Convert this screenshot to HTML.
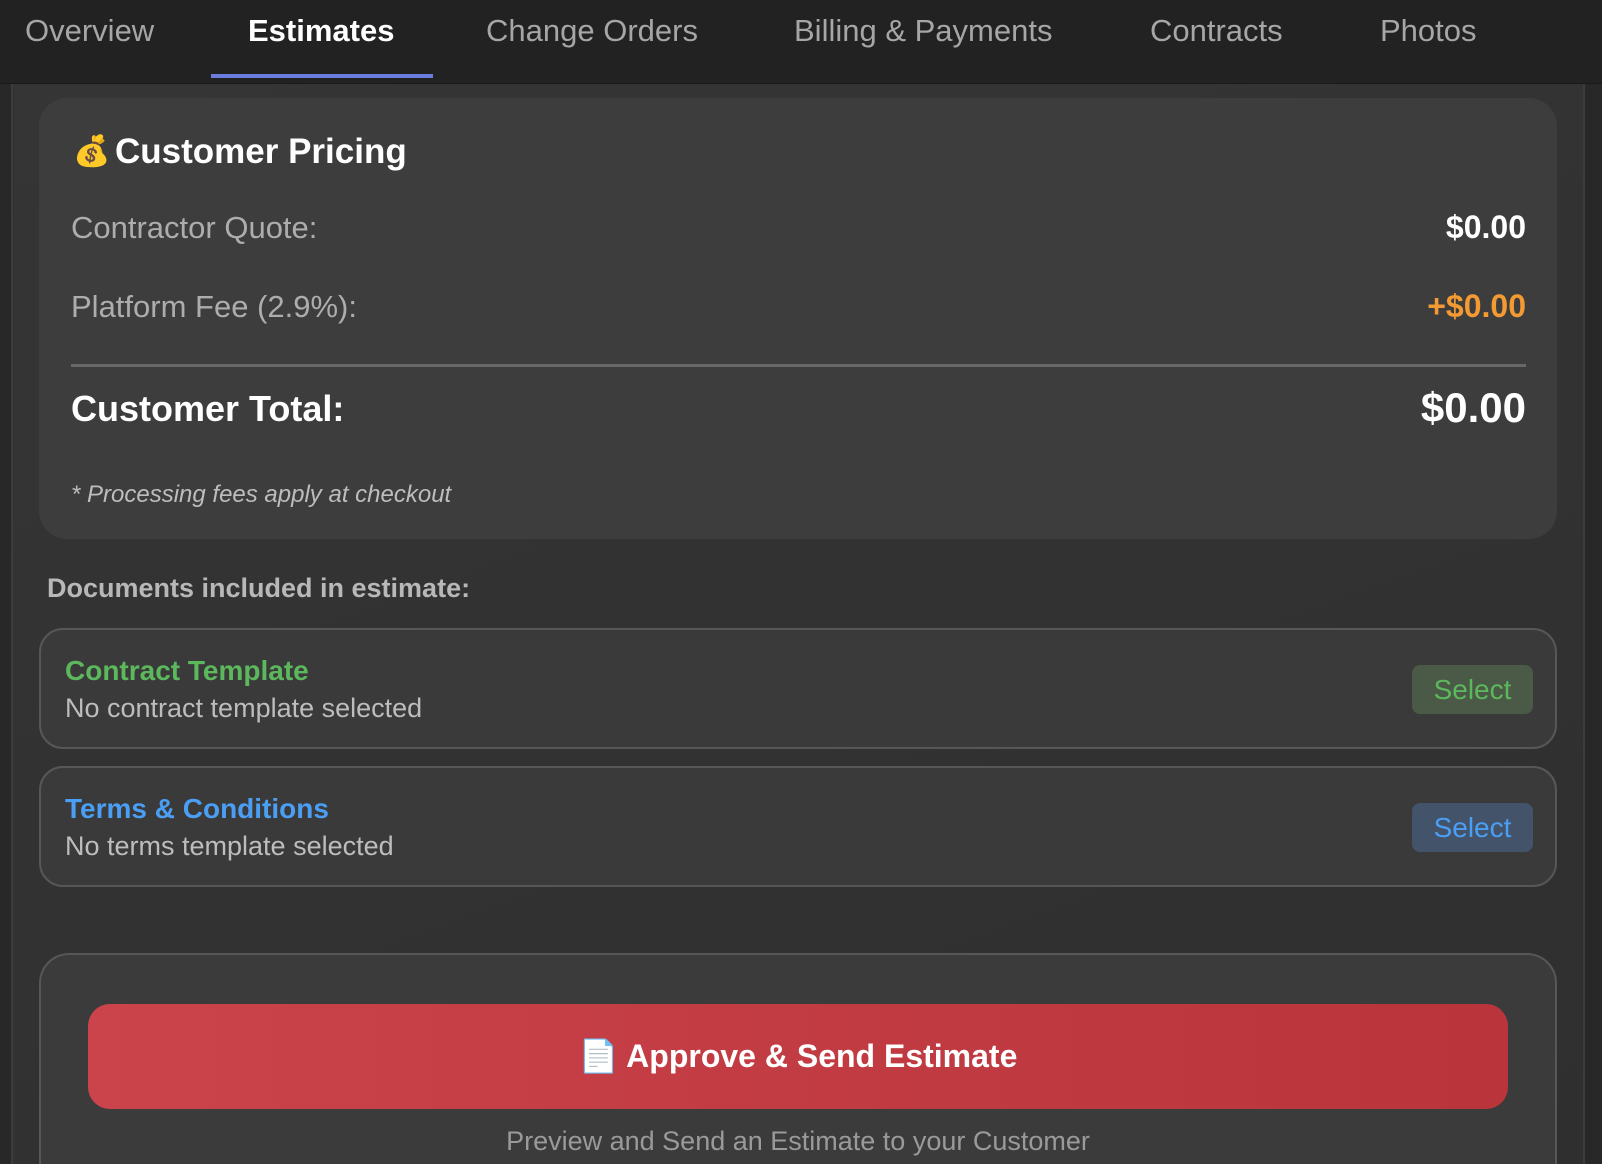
<!DOCTYPE html>
<html><head><meta charset="utf-8"><style>
*{box-sizing:border-box;margin:0;padding:0}
html,body{width:1602px;height:1164px;overflow:hidden}
body{background:#333;font-family:"Liberation Sans","DejaVu Sans",sans-serif;position:relative}
.nav{position:absolute;left:0;top:0;width:1602px;height:84px;background:#222;border-bottom:1px solid #1a1a1a}
.tab{position:absolute;top:10px;font-size:31px;color:#a6a6a6;line-height:42px}
.tab.act{color:#fff;font-weight:bold}
.ul{position:absolute;left:211px;top:74px;width:222px;height:4px;background:#6c7de0}
.lstrip{position:absolute;left:0;top:84px;width:13px;height:1080px;background:#282828;border-right:2px solid #3c3c3c}
.rstrip{position:absolute;left:1583px;top:84px;width:19px;height:1080px;background:#282828;border-left:2px solid #3c3c3c}
.main{position:absolute;left:15px;top:84px;width:1568px;height:1080px;background:linear-gradient(160deg,#353535,#2f2f2f)}
.card{position:absolute;left:39px;width:1518px;background:#3d3d3d;border-radius:28px}
.abs{position:absolute;white-space:nowrap}
.lbl{font-size:31px;color:#adadad}
.val{font-size:32px;color:#fff;font-weight:bold;right:31px}
.doc{position:absolute;left:39px;width:1518px;height:121px;border:2px solid #575757;border-radius:24px;background:#3a3a3a}
.btn{position:absolute;left:1371px;top:35px;width:121px;height:49px;border-radius:8px;font-size:28px;text-align:center;line-height:49px}
</style></head><body>
<div class="nav">
<div class="tab" style="left:25px">Overview</div>
<div class="tab act" style="left:248px">Estimates</div>
<div class="tab" style="left:486px">Change Orders</div>
<div class="tab" style="left:794px">Billing &amp; Payments</div>
<div class="tab" style="left:1150px">Contracts</div>
<div class="tab" style="left:1380px">Photos</div>
<div class="ul"></div>
</div>
<div class="lstrip"></div><div class="rstrip"></div>
<div class="main"></div>

<div class="card" style="top:98px;height:441px">
<div class="abs" style="left:34px;top:36px;font-size:30px">💰</div>
<div class="abs" style="left:76px;top:34px;font-size:35px;font-weight:bold;color:#fff">Customer Pricing</div>
<div class="abs lbl" style="left:32px;top:112px">Contractor Quote:</div>
<div class="abs val" style="top:111px">$0.00</div>
<div class="abs lbl" style="left:32px;top:191px">Platform Fee (2.9%):</div>
<div class="abs val" style="top:190px;color:#f39a32">+$0.00</div>
<div class="abs" style="left:32px;top:266px;width:1455px;height:3px;background:#686868"></div>
<div class="abs" style="left:32px;top:290px;font-size:36px;font-weight:bold;color:#fff">Customer Total:</div>
<div class="abs" style="right:31px;top:286px;font-size:42px;font-weight:bold;color:#fff">$0.00</div>
<div class="abs" style="left:32px;top:383px;font-size:24px;font-style:italic;color:#bdbdbd">* Processing fees apply at checkout</div>
</div>

<div class="abs" style="left:47px;top:573px;font-size:27px;font-weight:bold;color:#b8b8b8">Documents included in estimate:</div>

<div class="doc" style="top:628px">
<div class="abs" style="left:24px;top:25px;font-size:28px;font-weight:bold;color:#5cb85c">Contract Template</div>
<div class="abs" style="left:24px;top:63px;font-size:27px;color:#bdbdbd">No contract template selected</div>
<div class="btn" style="background:#4a5a47;color:#5cb85c">Select</div>
</div>
<div class="doc" style="top:766px">
<div class="abs" style="left:24px;top:25px;font-size:28px;font-weight:bold;color:#4a9ff5">Terms &amp; Conditions</div>
<div class="abs" style="left:24px;top:63px;font-size:27px;color:#bdbdbd">No terms template selected</div>
<div class="btn" style="background:#43536a;color:#4a9ff5">Select</div>
</div>

<div class="doc" style="top:953px;height:211px;background:#3b3b3b;border-radius:30px 30px 0 0;border-bottom:none">
<div class="abs" style="left:47px;top:49px;width:1420px;height:105px;border-radius:22px;background:linear-gradient(90deg,#cb434b,#b9343b);color:#fff;font-size:32px;font-weight:bold;text-align:center;line-height:105px">📄 Approve &amp; Send Estimate</div>
<div class="abs" style="left:0;width:1514px;top:171px;text-align:center;font-size:27px;color:#9a9a9a">Preview and Send an Estimate to your Customer</div>
</div>
</body></html>
